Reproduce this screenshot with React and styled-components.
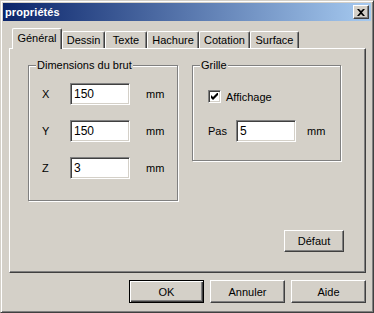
import React, { useState } from 'react';
import styled, { createGlobalStyle, css } from 'styled-components';

const GlobalStyle = createGlobalStyle`
  html, body {
    margin: 0;
    padding: 0;
    background: #d4d0c8;
  }
  body {
    font-family: "Liberation Sans", Arial, sans-serif;
    font-size: 11px;
    color: #000;
  }
`;

const raised = css`
  border: 1px solid;
  border-color: #fff #404040 #404040 #fff;
  box-shadow: inset -1px -1px 0 #808080, inset 1px 1px 0 #d4d0c8;
`;

const sunken = css`
  border: 1px solid;
  border-color: #808080 #fff #fff #808080;
  box-shadow: inset 1px 1px 0 #404040, inset -1px -1px 0 #d4d0c8;
`;

const Window = styled.div`
  width: 374px;
  height: 313px;
  box-sizing: border-box;
  display: flex;
  flex-direction: column;
  background: #d4d0c8;
  border: 1px solid;
  border-color: #d4d0c8 #404040 #404040 #d4d0c8;
  box-shadow: inset 1px 1px 0 #fff, inset -1px -1px 0 #808080;
  padding: 2px;
`;

const TitleBar = styled.div`
  height: 18px;
  display: flex;
  align-items: center;
  justify-content: space-between;
  padding: 0 2px 0 2px;
  background: linear-gradient(to right, #0a246a, #a6caf0);
`;

const Title = styled.span`
  color: #fff;
  font-weight: bold;
  font-size: 11px;
  letter-spacing: 0.1px;
`;

const CloseButton = styled.div`
  width: 16px;
  height: 14px;
  box-sizing: border-box;
  background: #d4d0c8;
  display: flex;
  align-items: center;
  justify-content: center;
  ${raised}
`;

const Body = styled.div`
  flex: 1;
  display: flex;
  flex-direction: column;
  padding: 7px 5px 7px 6px;
`;

const TabStrip = styled.div`
  display: flex;
  align-items: flex-end;
  height: 20px;
  padding-left: 3px;
  position: relative;
  z-index: 1;
`;

const Tab = styled.div`
  width: ${(p) => p.$w}px;
  box-sizing: border-box;
  height: ${(p) => (p.$active ? 21 : 17)}px;
  margin-bottom: ${(p) => (p.$active ? -1 : 0)}px;
  display: flex;
  align-items: center;
  justify-content: center;
  padding-bottom: ${(p) => (p.$active ? 2 : 0)}px;
  background: #d4d0c8;
  border-top: 1px solid #fff;
  border-left: 1px solid #fff;
  border-right: 1px solid #404040;
  border-radius: 2px 2px 0 0;
  box-shadow: inset -1px 0 0 #808080;
`;

const Panel = styled.div`
  flex: 1;
  display: flex;
  flex-direction: column;
  border: 1px solid;
  border-color: #fff #404040 #404040 #fff;
  box-shadow: inset -1px -1px 0 #808080;
  padding: 16px 21px 20px 18px;
`;

const GroupRow = styled.div`
  display: flex;
  align-items: flex-start;
  gap: 14px;
`;

const Group = styled.div`
  position: relative;
  width: ${(p) => p.$w}px;
  height: ${(p) => p.$h}px;
  box-sizing: border-box;
  border: 1px solid #808080;
  box-shadow: inset 1px 1px 0 #fff, 1px 1px 0 #fff;
  display: flex;
  flex-direction: column;
  padding: ${(p) => p.$pad};
`;

const Legend = styled.span`
  position: absolute;
  top: -7px;
  left: 7px;
  padding: 0 1px;
  background: #d4d0c8;
  line-height: 13px;
`;

const FieldRows = styled.div`
  display: flex;
  flex-direction: column;
  gap: ${(p) => p.$gap}px;
`;

const FieldRow = styled.div`
  display: flex;
  align-items: center;
  height: 22px;
`;

const FieldLabel = styled.span`
  width: ${(p) => p.$w}px;
`;

const Input = styled.input`
  width: 60px;
  height: 22px;
  box-sizing: border-box;
  padding: 0 3px;
  margin: 0;
  background: #fff;
  font-family: "Liberation Sans", Arial, sans-serif;
  font-size: 12px;
  color: #000;
  outline: none;
  ${sunken}
`;

const Unit = styled.span`
  margin-left: ${(p) => p.$gap}px;
`;

const CheckRow = styled.label`
  display: flex;
  align-items: center;
  gap: 5px;
  height: 13px;
`;

const CheckBox = styled.span`
  width: 13px;
  height: 13px;
  box-sizing: border-box;
  background: #fff;
  display: flex;
  align-items: center;
  justify-content: center;
  ${sunken}
`;

const PanelFooter = styled.div`
  margin-top: auto;
  display: flex;
  justify-content: flex-end;
`;

const Button = styled.button`
  width: ${(p) => p.$w}px;
  height: ${(p) => p.$h}px;
  box-sizing: border-box;
  margin: 0;
  padding: 0;
  background: #d4d0c8;
  font-family: "Liberation Sans", Arial, sans-serif;
  font-size: 11px;
  color: #000;
  ${raised}
  ${(p) =>
    p.$default &&
    css`
      border: 1px solid #000;
      box-shadow: inset 1px 1px 0 #fff, inset -1px -1px 0 #404040,
        inset -2px -2px 0 #808080;
    `}
`;

const ButtonRow = styled.div`
  display: flex;
  justify-content: flex-end;
  gap: 6px;
  margin-top: 7px;
`;

const tabs = [
  { label: 'Général', w: 50 },
  { label: 'Dessin', w: 43 },
  { label: 'Texte', w: 42 },
  { label: 'Hachure', w: 52 },
  { label: 'Cotation', w: 51 },
  { label: 'Surface', w: 49 },
];

const dims = [
  { axis: 'X', value: '150' },
  { axis: 'Y', value: '150' },
  { axis: 'Z', value: '3' },
];

const App = () => {
  const [active, setActive] = useState('Général');
  const [values, setValues] = useState(dims.map((d) => d.value));
  const [grid, setGrid] = useState(true);
  const [step, setStep] = useState('5');

  return (
    <>
      <GlobalStyle />
      <Window>
        <TitleBar>
          <Title>propriétés</Title>
          <CloseButton>
            <svg width="8" height="7" viewBox="0 0 8 7">
              <path d="M0 0h2l2 2 2-2h2L5 3.5 8 7H6L4 5 2 7H0l3-3.5z" fill="#000" />
            </svg>
          </CloseButton>
        </TitleBar>
        <Body>
          <TabStrip>
            {tabs.map((t) => (
              <Tab
                key={t.label}
                $w={t.w}
                $active={t.label === active}
                onClick={() => setActive(t.label)}
              >
                {t.label}
              </Tab>
            ))}
          </TabStrip>
          <Panel>
            <GroupRow>
              <Group $w={150} $h={136} $pad="17px 0 0 13px">
                <Legend>Dimensions du brut</Legend>
                <FieldRows $gap={15}>
                  {dims.map((d, i) => (
                    <FieldRow key={d.axis}>
                      <FieldLabel $w={28}>{d.axis}</FieldLabel>
                      <Input
                        value={values[i]}
                        onChange={(e) => {
                          const next = [...values];
                          next[i] = e.target.value;
                          setValues(next);
                        }}
                      />
                      <Unit $gap={16}>mm</Unit>
                    </FieldRow>
                  ))}
                </FieldRows>
              </Group>
              <Group $w={149} $h={96} $pad="24px 0 0 15px">
                <Legend>Grille</Legend>
                <FieldRows $gap={17}>
                  <CheckRow onClick={() => setGrid(!grid)}>
                    <CheckBox>
                      {grid && (
                        <svg width="7" height="7" viewBox="0 0 7 7">
                          <path d="M0 2v3l2 2 5-5V-1L2 4z" fill="#000" />
                        </svg>
                      )}
                    </CheckBox>
                    Affichage
                  </CheckRow>
                  <FieldRow>
                    <FieldLabel $w={28}>Pas</FieldLabel>
                    <Input value={step} onChange={(e) => setStep(e.target.value)} />
                    <Unit $gap={11}>mm</Unit>
                  </FieldRow>
                </FieldRows>
              </Group>
            </GroupRow>
            <PanelFooter>
              <Button $w={60} $h={22}>Défaut</Button>
            </PanelFooter>
          </Panel>
          <ButtonRow>
            <Button $w={75} $h={23} $default>OK</Button>
            <Button $w={75} $h={23}>Annuler</Button>
            <Button $w={75} $h={23}>Aide</Button>
          </ButtonRow>
        </Body>
      </Window>
    </>
  );
};

export default App;
